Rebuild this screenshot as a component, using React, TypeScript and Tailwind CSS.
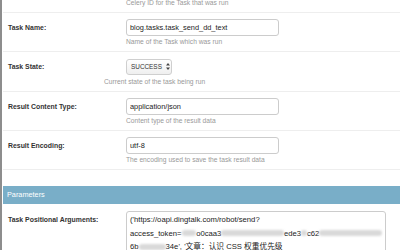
import React from 'react';

const font = "font-['Liberation_Sans','Noto_Sans_CJK_SC',Arial,sans-serif]";

const Blob = ({ w }: { w: number }) => (
  <span
    className="inline-block h-[6px] rounded-full bg-[#d9d9d9] blur-[1px] align-middle"
    style={{ width: w }}
  />
);

interface RowProps {
  label: string;
  help: string;
  helpIndent?: string;
  children: React.ReactNode;
  gap?: string;
}

const Row: React.FC<RowProps> = ({ label, help, helpIndent = 'ml-[123px]', children, gap = 'mt-[1px]' }) => (
  <div className="border-b border-[#eeeeee] pt-[6px] pb-[4px]">
    <div className="flex items-center">
      <label className="w-[123px] pl-[5px] text-[6.9px] font-bold leading-[17px] text-[#333]">{label}</label>
      {children}
    </div>
    <div className={`${helpIndent} ${gap} text-[6.7px] leading-[10px] text-[#999]`}>{help}</div>
  </div>
);

const TextInput = ({ value }: { value: string }) => (
  <input
    readOnly
    value={value}
    className="h-[17px] w-[153px] rounded-[3px] border border-[#cccccc] bg-white px-[3px] text-[7.4px] text-[#222] outline-none"
  />
);

export default function App() {
  return (
    <div className={`${font} h-[250px] w-[400px] overflow-hidden bg-white border-l-2 border-[#8d8d8d]`}>
      <div className="ml-[1px]">
        <div className="h-[13px] border-b border-[#eeeeee]">
          <div className="ml-[123px] text-[6.7px] leading-[6px] text-[#999]">Celery ID for the Task that was run</div>
        </div>

        <Row label="Task Name:" help="Name of the Task which was run">
          <TextInput value="blog.tasks.task_send_dd_text" />
        </Row>

        <Row label="Task State:" help="Current state of the task being run" helpIndent="ml-[101px]" gap="mt-[2px]">
          <div className="flex h-[16px] w-[46px] items-center rounded-[3px] border border-[#cfcfcf] bg-gradient-to-b from-white to-[#efefef] pl-[4px] text-[6.4px] text-[#333]">
            <span>SUCCESS</span>
            <svg width="4" height="7" viewBox="0 0 4 7" className="ml-[4px]">
              <path d="M2 0 L4 2.6 L0 2.6 Z M2 7 L4 4.4 L0 4.4 Z" fill="#444" />
            </svg>
          </div>
        </Row>

        <Row label="Result Content Type:" help="Content type of the result data">
          <TextInput value="application/json" />
        </Row>

        <Row label="Result Encoding:" help="The encoding used to save the task result data">
          <TextInput value="utf-8" />
        </Row>

        <div className="mt-[16px] h-[18px] bg-[#79aec8] pl-[4px] text-[7.3px] leading-[18px] text-white">Parameters</div>

        <div className="flex pt-[7px]">
          <label className="w-[123px] pl-[5px] pt-[4px] text-[6.9px] font-bold leading-[10px] text-[#333]">
            Task Positional Arguments:
          </label>
          <div className="h-[60px] w-[260px] rounded-[3px] border border-[#cccccc] px-[3px] pt-[1px] text-[7.7px] leading-[13.5px] text-[#222] whitespace-nowrap">
            <div>('https://oapi.dingtalk.com/robot/send?</div>
            <div className="flex items-center">
              <span>access_token=</span>
              <Blob w={15} />
              <span>o0caa3</span>
              <Blob w={64} />
              <span>ede3</span>
              <Blob w={6} />
              <span>c62</span>
              <Blob w={64} />
            </div>
            <div className="flex items-center">
              <span>6b</span>
              <Blob w={27} />
              <span>34e', '文章：认识 CSS 权重优先级</span>
            </div>
            <div>昵称：cdyay</div>
          </div>
        </div>
      </div>
    </div>
  );
}
